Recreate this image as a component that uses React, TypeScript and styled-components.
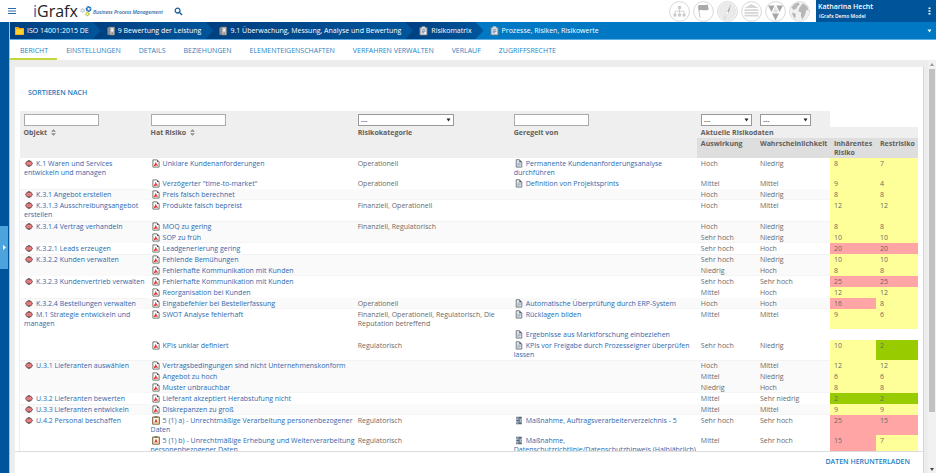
import React from "react";
import styled, { createGlobalStyle, css } from "styled-components";

const GlobalStyle = createGlobalStyle`
  * { box-sizing: border-box; }
  html, body { margin: 0; padding: 0; }
  body {
    font-family: "Open Sans", "Noto Sans", sans-serif;
    font-size: 7px;
    line-height: 9px;
    color: #6a6a6a;
    background: #fff;
  }
  button { font: inherit; color: inherit; border: 0; padding: 0; background: none; cursor: pointer; }
  a { color: #2f69ad; text-decoration: none; }
  svg { display: block; flex: none; }
`;

const Page = styled.div`
  display: flex;
  flex-direction: column;
  height: 100vh;
  overflow: hidden;
`;

/* ---------- top bar ---------- */

const TopBar = styled.header`
  display: flex;
  align-items: stretch;
  height: 22px;
  flex: none;
`;

const BarButton = styled.button`
  display: flex;
  align-items: center;
  margin-left: 8px;
`;

const Brand = styled.a`
  display: flex;
  align-items: center;
  margin-left: 17px;
`;

const BrandName = styled.span`
  font-family: "Liberation Sans Narrow", "Open Sans", sans-serif;
  font-size: 16px;
  line-height: 20px;
  color: #222;
`;

const BrandInitial = styled.span`
  color: #1a6db5;
`;

const BrandClaim = styled.span`
  margin: 3px 0 0 1px;
  font-size: 5px;
  font-style: italic;
  font-weight: 600;
  color: #2d6ca5;
  white-space: nowrap;
`;

const SearchButton = styled(BarButton)`
  margin-left: 11px;
`;

const Shortcuts = styled.nav`
  display: flex;
  align-items: center;
  gap: 3px;
  margin-left: auto;
  padding-right: 6px;
`;

const Shortcut = styled.button`
  display: flex;
`;

const UserPanel = styled.div`
  display: flex;
  align-items: center;
  justify-content: space-between;
  width: 120px;
  padding: 0 5px 0 2px;
  background: #005499;
  color: #fff;
`;

const UserName = styled.div`
  font-size: 7px;
  line-height: 10px;
  font-weight: 600;
`;

const UserModel = styled.div`
  padding-left: 1px;
  font-size: 5px;
  line-height: 8px;
  font-weight: 600;
`;

/* ---------- frame ---------- */

const Frame = styled.div`
  display: flex;
  flex: 1;
  min-height: 0;
`;

const Rail = styled.aside`
  display: flex;
  align-items: center;
  width: 10px;
  flex: none;
  padding-right: 1px;
  background: #00549c;
  border-right: 1px solid #a9c0d4;
`;

const RailHandle = styled.button`
  display: flex;
  align-items: center;
  width: 9px;
  height: 43px;
  padding-left: 3px;
  background: #4da3dc;
`;

const Main = styled.main`
  display: flex;
  flex-direction: column;
  flex: 1;
  min-width: 0;
`;

const Crumbs = styled.nav`
  display: flex;
  height: 18px;
  flex: none;
  padding-right: 4px;
  background: #0078c3;
  border-bottom: 1px solid #5fb0e2;
`;

const Crumb = styled.a<{ $level: number; $current?: boolean }>`
  position: relative;
  z-index: ${(p) => 10 - p.$level};
  display: flex;
  align-items: center;
  gap: 3px;
  margin-left: ${(p) => (p.$level ? "-8px" : "0")};
  padding: 0 12px 0 ${(p) => (p.$level ? "14px" : "5px")};
  color: #fff;
  white-space: nowrap;
  ${(p) =>
    !p.$current &&
    css`
      background: linear-gradient(90deg, #003f80, #00559b);
      clip-path: polygon(0 0, calc(100% - 8px) 0, 100% 50%, calc(100% - 8px) 100%, 0 100%);
    `}
`;

const CrumbMenu = styled.button`
  display: flex;
  align-items: center;
  margin-left: auto;
`;

const Tabs = styled.nav`
  display: flex;
  height: 20px;
  flex: none;
`;

const Tab = styled.a<{ $active?: boolean }>`
  display: flex;
  align-items: center;
  padding: 2px 9px 0;
  color: #2a83c4;
  white-space: nowrap;
  border-bottom: 2px solid ${(p) => (p.$active ? "#c5d63c" : "transparent")};
  &:first-child { padding-left: 10px; }
`;

const Workspace = styled.div`
  display: flex;
  flex: 1;
  min-height: 0;
  background: #ededed;
`;

const Card = styled.section`
  display: flex;
  flex-direction: column;
  flex: 1;
  min-width: 0;
  margin: 7px 4px 0 5px;
  background: #fff;
  border-right: 1px solid #d6d6d6;
`;

const CardTools = styled.div`
  height: 44px;
  flex: none;
  padding: 21px 13px 0;
`;

const TextButton = styled.button`
  color: #1e7cc0;
  font-weight: 600;
`;

const Report = styled.div`
  flex: 1;
  min-height: 0;
  overflow: hidden;
  padding: 0 5px 0 4px;
`;

const CardFooter = styled.footer`
  display: flex;
  justify-content: flex-end;
  align-items: center;
  height: 22px;
  flex: none;
  padding: 0 13px 2px;
  border-top: 1px solid #dcdcdc;
`;

const ScrollTrack = styled.div`
  display: flex;
  flex-direction: column;
  align-items: center;
  width: 8px;
  padding: 3px 0 2px;
  background: #f1f1f1;
`;

const ScrollThumb = styled.div`
  width: 6px;
  height: 84%;
  margin: 3px 0 auto;
  background: #c1c1c1;
`;

/* ---------- report table ---------- */

const Table = styled.table`
  width: 100%;
  table-layout: fixed;
  border-collapse: collapse;
`;

const Col = styled.col<{ $w: number }>`
  width: ${(p) => p.$w}px;
`;

const FilterCell = styled.td<{ $blank?: boolean; $flush?: boolean }>`
  height: 16px;
  padding: 3px 0 1px ${(p) => (p.$flush ? "0" : "4px")};
  background: ${(p) => (p.$blank ? "#fff" : "#efefef")};
`;

const HeadCell = styled.th<{ $sub?: boolean; $flush?: boolean }>`
  height: ${(p) => (p.$sub ? "20px" : "11px")};
  padding: 1px 0 1px ${(p) => (p.$flush ? "0" : "4px")};
  text-align: left;
  vertical-align: top;
  font-weight: 700;
  color: #606060;
  background: ${(p) => (p.$sub ? "#dedede" : "#efefef")};
`;

const SortButton = styled.button`
  display: flex;
  align-items: center;
  gap: 4px;
  font-weight: 700;
`;

const TextFilter = styled.input`
  display: block;
  width: 75px;
  height: 12px;
  padding: 0 2px;
  font: inherit;
  background: #fff;
  border: 1px solid #aaa;
`;

const SelectBox = styled.div<{ $w: number }>`
  display: grid;
  width: ${(p) => p.$w}px;
  align-items: center;
  & > * { grid-area: 1 / 1; }
  & > svg { justify-self: end; margin-right: 3px; pointer-events: none; }
`;

const Select = styled.select`
  appearance: none;
  width: 100%;
  height: 12px;
  padding: 0 2px;
  font: inherit;
  line-height: 9px;
  color: #333;
  background: #fff;
  border: 1px solid #999;
  border-radius: 0;
`;

const Group = styled.tbody<{ $striped: boolean; $roomy?: boolean }>`
  background: ${(p) => (p.$striped ? "#fafafa" : "#fff")};
  border-left: 1px solid #efefef;
  ${(p) => p.$striped && css`
    & > tr:first-child > td { box-shadow: inset 0 1px #f3f3f3; }
    & > tr:last-child > td:not([rowspan]) { box-shadow: inset 0 -1px #f5f5f5; }
  `}
  ${(p) => p.$roomy && css`& > tr > td { padding-bottom: 2px; }`}
`;

const tones = { y: "#ffff99", r: "#ffa5a5", g: "#99cc00" };
type Tone = keyof typeof tones;

const Cell = styled.td<{ $tone?: Tone; $flush?: boolean }>`
  height: 11px;
  padding: 1px 0 1px ${(p) => (p.$flush ? "0" : "4px")};
  vertical-align: top;
  ${(p) => p.$tone && css`background: ${tones[p.$tone]}; box-shadow: none !important;`}
`;

const ItemLink = styled.a`
  & > svg { display: inline-block; vertical-align: top; margin: 0 3px 0 1px; }
`;

/* ---------- icons ---------- */

const ObjectIcon = () => (
  <svg width="8" height="9" viewBox="0 0 8 9">
    <path d="M2 1.800h4L8 4.500 6 7.200H2L0 4.500z" fill="#70585a" />
    <path d="M2.100 2.800h3.800L7 4.500 5.900 6.200H2.100L1 4.500z" fill="#e8797e" />
    <path d="M3 .9h2v1H3zM3 7.100h2v1H3z" fill="#777" />
  </svg>
);

const RiskIcon = () => (
  <svg width="8" height="9" viewBox="0 0 8 9">
    <path d="M.9.9h4.2l2 2v5.2H.9z" fill="#fff" stroke="#666" strokeWidth=".9" />
    <path d="M5 .8v2.200h2.200z" fill="#555" />
    <path d="M2 7V5.600l1-.4.2-2 1 .2.6 1.800L6 6v.7l-1.700-.2L3 7z" fill="#e8352e" />
  </svg>
);

const ClipRiskIcon = () => (
  <svg width="8" height="9" viewBox="0 0 8 9">
    <path d="M.6 1h6.800v7.200H.6z" fill="#e9dcae" stroke="#776032" strokeWidth=".9" />
    <path d="M2 2.200h4v5H2z" fill="#fff" />
    <path d="M2.400 .3h3.200v1.400H2.400z" fill="#666" />
    <path d="M2 6.800l1-1.500.6-2h.9l.5 2 1 1.500-2-.6z" fill="#dd2f22" />
  </svg>
);

const DocIcon = () => (
  <svg width="8" height="9" viewBox="0 0 8 9">
    <path d="M1.200.7h3.200l2.400 2.400v5H1.200z" fill="#e3e9ef" stroke="#6b737b" strokeWidth=".9" />
    <path d="M4.300.7v2.600h2.600z" fill="#555" />
    <path d="M2.300 4.200h3.400M2.300 5.600h3.400M2.300 6.900h2.200" stroke="#8b9cae" strokeWidth=".7" />
  </svg>
);

const MeasureIcon = () => (
  <svg width="8" height="9" viewBox="0 0 8 9">
    <path d="M1.200 .8h5.600v2H1.200zM1.200 3.500h5.600v2H1.200zM1.200 6.200h5.600v2H1.200z" fill="#59636f" />
    <path d="M2 1.800h1.500M4.600 4.500h1.500M2 7.200h1.500" stroke="#b8cbe0" strokeWidth=".9" />
    <path d="M4 2.500v4.500" stroke="#3d78b8" strokeWidth=".9" fill="none" />
  </svg>
);

const SortIcon = () => (
  <svg width="5" height="7" viewBox="0 0 5 7">
    <path d="M.2 2.800L2.500.2l2.300 2.600zM.2 4.200l2.300 2.600 2.300-2.600z" fill="#777" />
    <path d="M1.700 2.200l.8-.8.8.8zM1.700 4.800l.8.8.8-.8z" fill="#efefef" />
  </svg>
);

const Caret = ({ fill = "#222" }: { fill?: string }) => (
  <svg width="5" height="4" viewBox="0 0 5 4">
    <path d="M.5.5h4l-2 3z" fill={fill} />
  </svg>
);

const FolderIcon = () => (
  <svg width="9" height="8" viewBox="0 0 9 8">
    <path d="M0 0h3.400l1 1H9v7H0z" fill="#f2a516" />
    <path d="M.8 2.200h7.600v5H.8z" fill="#ffd02f" />
  </svg>
);

const BinderIcon = () => (
  <svg width="8" height="10" viewBox="0 0 8 10">
    <path d="M.5 1.500L3 1v7.500l-2.500.4z" fill="#8d9297" />
    <path d="M2.600 1H7.600v8H2.600z" fill="#b9bbbc" stroke="#77706a" strokeWidth=".6" />
    <path d="M4.200 2.400h2v3h-2z" fill="#f0f0f0" />
    <circle cx="5.200" cy="7.200" r=".6" fill="#666" />
  </svg>
);

const ClipboardIcon = () => (
  <svg width="9" height="10" viewBox="0 0 9 10">
    <path d="M.6 1.200h7.800v8H.6z" fill="#8f8a80" />
    <path d="M1.600 2.200h5.800v6.200H1.600z" fill="#e9eef5" />
    <path d="M2.800.4h3.400v1.600H2.800z" fill="#d9d9d9" />
    <path d="M2.600 3.800h3.800M2.600 5.300h3.800M2.600 6.800h2.600" stroke="#5575a5" strokeWidth=".8" />
  </svg>
);

const GearsIcon = () => (
  <svg width="14" height="12" viewBox="0 0 14 12">
    <circle cx="4.600" cy="5.500" r="1.600" fill="none" stroke="#bdbdbd" strokeWidth="1.300" strokeDasharray="1.200 .4" />
    <circle cx="10.600" cy="4" r="2" fill="none" stroke="#1a6db5" strokeWidth="1.800" strokeDasharray="1.500 .3" />
    <circle cx="9.400" cy="9" r="1.500" fill="none" stroke="#b7cb33" strokeWidth="1.500" strokeDasharray="1.200 .3" />
  </svg>
);

const shortcutArt: Record<string, React.ReactNode> = {
  Organigramm: (
    <g fill="#cacaca">
      <path d="M9 5h3v3H9zM4.500 12.500h3v3h-3zM9 12.500h3v3H9zM13.500 12.500h3v3h-3z" />
      <path d="M10.500 8v4.500M6 12.500v-2.300h9v2.300" fill="none" stroke="#cacaca" strokeWidth=".8" />
    </g>
  ),
  Ziele: (
    <g>
      <path d="M5.200 5.200l1.800 11.500" stroke="#aaa" strokeWidth=".7" />
      <path d="M5.200 4.500c3-1.500 5 .5 9.500-1.300l1 5.300c-4.500 2-6.500-.6-9.700 1z" fill="#a9a9a9" />
    </g>
  ),
  Kompass: (
    <g>
      <circle cx="10.500" cy="10.500" r="9" fill="#ebebeb" />
      <circle cx="10.500" cy="10.500" r="7" fill="none" stroke="#dcdcdc" strokeDasharray=".7 2.500" />
      <path d="M14 3l-2 8-1.500-.8z" fill="#a5a5a5" />
      <path d="M7 18l2.400-7.900 2.400 1.100z" fill="#fff" stroke="#bbb" strokeWidth=".4" />
    </g>
  ),
  Haus: (
    <g fill="#d6d6d6">
      <path d="M10.500 3l7 4H3.500zM3.500 8.200h14v1.800h-14zM3.500 11h14v1.800h-14zM3.500 13.800h14v1.800h-14z" />
    </g>
  ),
  Risiken: (
    <g fill="#a6a6a6">
      <path d="M3 4.500h6.600L6.500 11zM11.400 4.500H18L14.500 11zM7 12.500h7l-3.500 7z" />
      <path d="M7.500 11.400l3-6 3 6z" fill="#e2e2e2" />
    </g>
  ),
  Welt: (
    <g>
      <circle cx="10.500" cy="10.500" r="9.500" fill="#f1f1f1" />
      <path d="M2.500 6.500C4 3.500 7 1.600 9.500 1.500l1.300 2-2.300 1.700-1 2.300-3 1.500zM10.500 6.500l3.500-4.300 4.300 3.300 1.400 4.500-2.200-1.500-1.300 5-2.700 5-1.700-3.500.3-3.500-2.800-1.500zM3 11.500l3.800 1.300-.5 4.700C4.500 16.300 3.300 14 3 11.500z" fill="#b8b8b8" />
    </g>
  ),
};

/* ---------- data ---------- */

type Entry = {
  risk?: string;
  clip?: boolean;
  category?: string;
  rule?: string;
  measure?: boolean;
  impact?: string;
  chance?: string;
  inherent?: [number, Tone];
  residual?: [number, Tone];
};

const groups: { object: string; roomy?: boolean; entries: Entry[] }[] = [
  { object: "K.1 Waren und Services entwickeln und managen", entries: [
    { risk: "Unklare Kundenanforderungen", category: "Operationell", rule: "Permanente Kundenanforderungsanalyse durchführen", impact: "Hoch", chance: "Niedrig", inherent: [8, "y"], residual: [7, "y"] },
    { risk: "Verzögerter \"time-to-market\"", category: "Operationell", rule: "Definition von Projektsprints", impact: "Mittel", chance: "Mittel", inherent: [9, "y"], residual: [4, "y"] },
  ] },
  { object: "K.3.1 Angebot erstellen", entries: [
    { risk: "Preis falsch berechnet", impact: "Hoch", chance: "Niedrig", inherent: [8, "y"], residual: [8, "y"] },
  ] },
  { object: "K.3.1.3 Ausschreibungsangebot erstellen", roomy: true, entries: [
    { risk: "Produkte falsch bepreist", category: "Finanziell, Operationell", impact: "Hoch", chance: "Mittel", inherent: [12, "y"], residual: [12, "y"] },
  ] },
  { object: "K.3.1.4 Vertrag verhandeln", entries: [
    { risk: "MOQ zu gering", category: "Finanziell, Regulatorisch", impact: "Hoch", chance: "Niedrig", inherent: [8, "y"], residual: [8, "y"] },
    { risk: "SOP zu früh", impact: "Sehr hoch", chance: "Niedrig", inherent: [10, "y"], residual: [10, "y"] },
  ] },
  { object: "K.3.2.1 Leads erzeugen", entries: [
    { risk: "Leadgenerierung gering", impact: "Sehr hoch", chance: "Hoch", inherent: [20, "r"], residual: [20, "r"] },
  ] },
  { object: "K.3.2.2 Kunden verwalten", entries: [
    { risk: "Fehlende Bemühungen", impact: "Sehr hoch", chance: "Niedrig", inherent: [10, "y"], residual: [10, "y"] },
    { risk: "Fehlerhafte Kommunikation mit Kunden", impact: "Niedrig", chance: "Hoch", inherent: [8, "y"], residual: [8, "y"] },
  ] },
  { object: "K.3.2.3 Kundenvertrieb verwalten", entries: [
    { risk: "Fehlerhafte Kommunikation mit Kunden", impact: "Sehr hoch", chance: "Sehr hoch", inherent: [25, "r"], residual: [25, "r"] },
    { risk: "Reorganisation bei Kunden", impact: "Mittel", chance: "Hoch", inherent: [12, "y"], residual: [12, "y"] },
  ] },
  { object: "K.3.2.4 Bestellungen verwalten", entries: [
    { risk: "Eingabefehler bei Bestellerfassung", category: "Operationell", rule: "Automatische Überprüfung durch ERP-System", impact: "Hoch", chance: "Hoch", inherent: [16, "r"], residual: [8, "y"] },
  ] },
  { object: "M.1 Strategie entwickeln und managen", entries: [
    { risk: "SWOT Analyse fehlerhaft", category: "Finanziell, Operationell, Regulatorisch, Die Reputation betreffend", rule: "Rücklagen bilden", impact: "Mittel", chance: "Mittel", inherent: [9, "y"], residual: [6, "y"] },
    { rule: "Ergebnisse aus Marktforschung einbeziehen" },
    { risk: "KPIs unklar definiert", category: "Regulatorisch", rule: "KPIs vor Freigabe durch Prozesseigner überprüfen lassen", impact: "Sehr hoch", chance: "Niedrig", inherent: [10, "y"], residual: [2, "g"] },
  ] },
  { object: "U.3.1 Lieferanten auswählen", entries: [
    { risk: "Vertragsbedingungen sind nicht Unternehmenskonform", impact: "Hoch", chance: "Mittel", inherent: [12, "y"], residual: [12, "y"] },
    { risk: "Angebot zu hoch", impact: "Mittel", chance: "Niedrig", inherent: [6, "y"], residual: [6, "y"] },
    { risk: "Muster unbrauchbar", impact: "Niedrig", chance: "Hoch", inherent: [8, "y"], residual: [8, "y"] },
  ] },
  { object: "U.3.2 Lieferanten bewerten", entries: [
    { risk: "Lieferant akzeptiert Herabstufung nicht", impact: "Mittel", chance: "Sehr niedrig", inherent: [2, "g"], residual: [2, "g"] },
  ] },
  { object: "U.3.3 Lieferanten entwickeln", entries: [
    { risk: "Diskrepanzen zu groß", impact: "Mittel", chance: "Mittel", inherent: [9, "y"], residual: [9, "y"] },
  ] },
  { object: "U.4.2 Personal beschaffen", entries: [
    { risk: "5 (1) a) - Unrechtmäßige Verarbeitung personenbezogener Daten", clip: true, category: "Regulatorisch", rule: "Maßnahme, Auftragsverarbeiterverzeichnis - 5", measure: true, impact: "Sehr hoch", chance: "Sehr hoch", inherent: [25, "r"], residual: [15, "r"] },
    { risk: "5 (1) b) - Unrechtmäßige Erhebung und Weiterverarbeitung personenbezogener Daten", clip: true, category: "Regulatorisch", rule: "Maßnahme, Datenschutzrichtlinie/Datenschutzhinweis (Halbjährlich)", measure: true, impact: "Mittel", chance: "Sehr hoch", inherent: [15, "r"], residual: [7, "y"] },
  ] },
];

const crumbs = [
  { label: "ISO 14001:2015 DE", icon: <FolderIcon /> },
  { label: "9 Bewertung der Leistung", icon: <BinderIcon /> },
  { label: "9.1 Überwachung, Messung, Analyse und Bewertung", icon: <BinderIcon /> },
  { label: "Risikomatrix", icon: <ClipboardIcon /> },
  { label: "Prozesse, Risiken, Risikowerte", icon: <ClipboardIcon /> },
];

const tabs = ["BERICHT", "EINSTELLUNGEN", "DETAILS", "BEZIEHUNGEN", "ELEMENTEIGENSCHAFTEN", "VERFAHREN VERWALTEN", "VERLAUF", "ZUGRIFFSRECHTE"];

const columns = [127, 211, 152, 187, 59, 74, 46, 42];

const FilterSelect = ({ label, width }: { label: string; width: number }) => (
  <SelectBox $w={width}>
    <Select aria-label={label} defaultValue="">
      <option value="">---</option>
    </Select>
    <Caret />
  </SelectBox>
);

export default function App() {
  return (
    <Page>
      <GlobalStyle />
      <TopBar>
        <BarButton aria-label="Menü">
          <svg width="8" height="8" viewBox="0 0 8 8">
            <path d="M0 1.500h8M0 4h8M0 6.500h8" stroke="#2a6aa8" strokeWidth="1" />
          </svg>
        </BarButton>
        <Brand href="#">
          <BrandName><BrandInitial>i</BrandInitial>Grafx</BrandName>
          <GearsIcon />
          <BrandClaim>Business Process Management</BrandClaim>
        </Brand>
        <SearchButton aria-label="Suche">
          <svg width="9" height="9" viewBox="0 0 9 9">
            <circle cx="3.600" cy="3.600" r="2.400" fill="none" stroke="#145ea3" strokeWidth="1.300" />
            <path d="M5.500 5.500l2.500 2.500" stroke="#145ea3" strokeWidth="1.400" />
          </svg>
        </SearchButton>
        <Shortcuts>
          {Object.entries(shortcutArt).map(([name, art]) => (
            <Shortcut key={name} aria-label={name}>
              <svg width="21" height="21" viewBox="0 0 21 21">
                <circle cx="10.500" cy="10.500" r="9.900" fill="#fff" stroke="#d2d2d2" strokeWidth=".9" />
                {art}
              </svg>
            </Shortcut>
          ))}
        </Shortcuts>
        <UserPanel>
          <div>
            <UserName>Katharina Hecht</UserName>
            <UserModel>iGrafx Demo Model</UserModel>
          </div>
          <button aria-label="Mehr">
            <svg width="3" height="8" viewBox="0 0 3 8">
              <path d="M.5.500h2v1.600h-2zM.5 3.200h2v1.600h-2zM.5 5.900h2v1.600h-2z" fill="#fff" />
            </svg>
          </button>
        </UserPanel>
      </TopBar>
      <Frame>
        <Rail>
          <RailHandle aria-label="Navigation öffnen">
            <svg width="3" height="5" viewBox="0 0 3 5"><path d="M0 0l3 2.500L0 5z" fill="#fff" /></svg>
          </RailHandle>
        </Rail>
        <Main>
          <Crumbs>
            {crumbs.map((c, i) => (
              <Crumb key={c.label} href="#" $level={i} $current={i === crumbs.length - 1}>
                {c.icon}
                {c.label}
              </Crumb>
            ))}
            <CrumbMenu aria-label="Pfad"><Caret fill="#fff" /></CrumbMenu>
          </Crumbs>
          <Tabs>
            {tabs.map((t, i) => (
              <Tab key={t} href="#" $active={i === 0}>{t}</Tab>
            ))}
          </Tabs>
          <Workspace>
            <Card>
              <CardTools><TextButton>SORTIEREN NACH</TextButton></CardTools>
              <Report>
                <Table>
                  <colgroup>{columns.map((w, i) => <Col key={i} $w={w} />)}</colgroup>
                  <thead>
                    <tr>
                      <FilterCell><TextFilter aria-label="Objekt" /></FilterCell>
                      <FilterCell><TextFilter aria-label="Hat Risiko" /></FilterCell>
                      <FilterCell $flush><FilterSelect label="Risikokategorie" width={96} /></FilterCell>
                      <FilterCell><TextFilter aria-label="Geregelt von" /></FilterCell>
                      <FilterCell><FilterSelect label="Auswirkung" width={51} /></FilterCell>
                      <FilterCell><FilterSelect label="Wahrscheinlichkeit" width={51} /></FilterCell>
                      <FilterCell $blank colSpan={2} />
                    </tr>
                    <tr>
                      <HeadCell rowSpan={2}><SortButton>Objekt <SortIcon /></SortButton></HeadCell>
                      <HeadCell rowSpan={2}><SortButton>Hat Risiko <SortIcon /></SortButton></HeadCell>
                      <HeadCell $flush rowSpan={2}>Risikokategorie</HeadCell>
                      <HeadCell rowSpan={2}>Geregelt von</HeadCell>
                      <HeadCell colSpan={4}>Aktuelle Risikodaten</HeadCell>
                    </tr>
                    <tr>
                      <HeadCell $sub>Auswirkung</HeadCell>
                      <HeadCell $sub>Wahrscheinlichkeit</HeadCell>
                      <HeadCell $sub>Inhärentes Risiko</HeadCell>
                      <HeadCell $sub>Restrisiko</HeadCell>
                    </tr>
                  </thead>
                  {groups.map((g, gi) => (
                    <Group key={g.object} $striped={gi % 2 === 1} $roomy={g.roomy}>
                      {g.entries.map((e, i) => (
                        <tr key={i}>
                          {i === 0 && (
                            <Cell rowSpan={g.entries.length}>
                              <ItemLink href="#"><ObjectIcon />{g.object}</ItemLink>
                            </Cell>
                          )}
                          <Cell>{e.risk && <ItemLink href="#">{e.clip ? <ClipRiskIcon /> : <RiskIcon />}{e.risk}</ItemLink>}</Cell>
                          <Cell $flush>{e.category}</Cell>
                          <Cell>{e.rule && <ItemLink href="#">{e.measure ? <MeasureIcon /> : <DocIcon />}{e.rule}</ItemLink>}</Cell>
                          <Cell>{e.impact}</Cell>
                          <Cell>{e.chance}</Cell>
                          <Cell $tone={e.inherent?.[1]}>{e.inherent?.[0]}</Cell>
                          <Cell $tone={e.residual?.[1]}>{e.residual?.[0]}</Cell>
                        </tr>
                      ))}
                    </Group>
                  ))}
                </Table>
              </Report>
              <CardFooter><TextButton>DATEN HERUNTERLADEN</TextButton></CardFooter>
            </Card>
            <ScrollTrack>
              <svg width="4" height="3" viewBox="0 0 4 3"><path d="M2 0l2 3H0z" fill="#999" /></svg>
              <ScrollThumb />
              <svg width="4" height="3" viewBox="0 0 4 3"><path d="M0 0h4L2 3z" fill="#444" /></svg>
            </ScrollTrack>
          </Workspace>
        </Main>
      </Frame>
    </Page>
  );
}
